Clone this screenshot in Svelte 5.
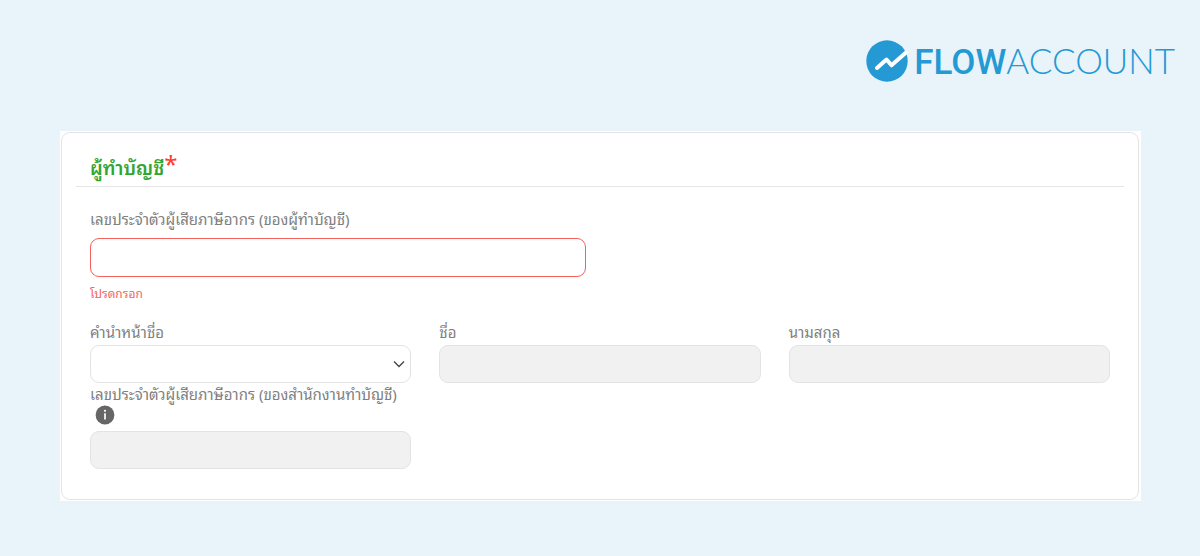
<script>
  let taxId = $state('');
  let prefix = $state('');
</script>

<div class="page">
  <header>
    <a class="brand" href="#home" aria-label="FlowAccount">
      <svg class="mark" viewBox="0 0 42 42" aria-hidden="true">
        <circle cx="21" cy="21" r="20.7" fill="#2499d3" />
        <path d="M11 28 L20.5 19.5 L25.5 25.3 L40 12.5" fill="none" stroke="#fff" stroke-width="4" stroke-linejoin="round" stroke-linecap="round" />
      </svg>
      <span class="wordmark"><b>FLOW</b>ACCOUNT</span>
    </a>
  </header>

  <main>
    <form class="card">
      <h1>ผู้ทำบัญชี<span class="required">*</span></h1>

      <div class="fields">
        <div class="field wide">
          <label for="tax-id">เลขประจำตัวผู้เสียภาษีอากร (ของผู้ทำบัญชี)</label>
          <input id="tax-id" class="invalid" type="text" bind:value={taxId} aria-describedby="tax-id-error" />
          <p id="tax-id-error" class="error">โปรดกรอก</p>
        </div>

        <div class="row">
          <div class="field">
            <label for="prefix">คำนำหน้าชื่อ</label>
            <div class="select">
              <select id="prefix" bind:value={prefix}><option value=""></option></select>
              <svg viewBox="0 0 12 8" aria-hidden="true"><path d="M1 1.5 L6 6.5 L11 1.5" fill="none" stroke="#444" stroke-width="1.3" /></svg>
            </div>
          </div>
          <div class="field">
            <label for="first-name">ชื่อ</label>
            <input id="first-name" type="text" disabled />
          </div>
          <div class="field">
            <label for="last-name">นามสกุล</label>
            <input id="last-name" type="text" disabled />
          </div>
          <div class="field office">
            <label for="office-id">เลขประจำตัวผู้เสียภาษีอากร (ของสำนักงานทำบัญชี)</label>
            <svg class="info" viewBox="0 0 20 20" aria-hidden="true">
              <circle cx="10" cy="10" r="9.4" fill="#666" />
              <circle cx="10" cy="5.8" r="1.1" fill="#fff" />
              <path d="M10 8.3 V14.6" stroke="#fff" stroke-width="1.7" />
            </svg>
            <input id="office-id" type="text" disabled />
          </div>
        </div>
      </div>
    </form>
  </main>
</div>

<style>
  :global(body) {
    margin: 0;
    background: #e8f3fa;
  }
  .page {
    box-sizing: border-box;
    min-height: 100vh;
    padding: 40px 25px 55px 60px;
    font-family: "Noto Sans Thai Looped", "Noto Sans Thai", "Noto Sans", sans-serif;
    color: #808080;
  }
  header {
    display: flex;
    justify-content: flex-end;
  }
  .brand {
    display: flex;
    align-items: center;
    gap: 6px;
    height: 42px;
    color: #2499d3;
    text-decoration: none;
  }
  .mark {
    width: 42px;
    height: 42px;
  }
  .wordmark {
    font: 300 35px/42px Lato, sans-serif;
  }
  .wordmark b {
    font-family: Roboto, sans-serif;
    font-weight: 500;
  }
  main {
    margin: 49px 34px 0 0;
    padding: 1px 2px 1px 1px;
    background: #fff;
  }
  .card {
    padding: 16px 14px 30px;
    border: 1px solid #e4e4e4;
    border-radius: 9px;
  }
  h1 {
    display: flex;
    margin: 0;
    padding-left: 14px;
    height: 37px;
    border-bottom: 1px solid #e5e5e5;
    color: #33a532;
    font-size: 19px;
    font-weight: 600;
    line-height: 36px;
  }
  .required {
    color: #ff3b30;
    font-size: 24px;
    font-weight: 400;
    line-height: 26px;
  }
  .fields {
    padding: 20px 14px 0;
  }
  .field {
    display: flex;
    flex-direction: column;
    min-width: 0;
  }
  .wide {
    width: calc(50% - 14px);
  }
  label {
    margin-bottom: 3px;
    font-size: 15px;
    line-height: 22px;
    white-space: nowrap;
  }
  .wide label {
    margin-bottom: 9px;
  }
  .office label {
    margin-bottom: 2px;
    line-height: 20px;
  }
  input,
  select {
    box-sizing: border-box;
    width: 100%;
    height: 38px;
    padding: 0 12px;
    border: 1px solid #e3e3e3;
    border-radius: 9px;
    background: #fff;
    color: #444;
    font: inherit;
    font-size: 15px;
  }
  input:disabled {
    background: #f1f1f1;
  }
  .invalid {
    height: 39px;
    border-color: #f4605a;
  }
  .error {
    margin: 6px 0 0;
    color: #f4645c;
    font-size: 12px;
    line-height: 20px;
  }
  .row {
    display: grid;
    grid-template-columns: repeat(3, minmax(0, 1fr));
    column-gap: 28px;
    margin-top: 17px;
  }
  .select {
    display: grid;
    align-items: center;
    justify-items: end;
  }
  .select select,
  .select svg {
    grid-area: 1 / 1;
  }
  .select select {
    appearance: none;
  }
  .select svg {
    width: 12px;
    height: 8px;
    margin-right: 6px;
    pointer-events: none;
  }
  .info {
    width: 20px;
    height: 20px;
    margin: 0 0 6px 5px;
  }
</style>
